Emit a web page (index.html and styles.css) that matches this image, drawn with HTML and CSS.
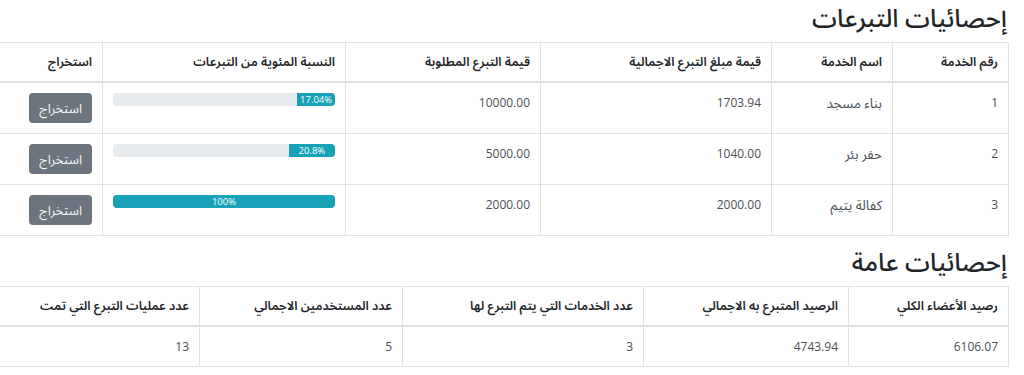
FILE: index.html
```html
<!DOCTYPE html>
<html lang="ar" dir="rtl">
<head>
<meta charset="utf-8">
<title>إحصائيات</title>
<link rel="stylesheet" href="styles.css">
</head>
<body>
<main class="page">
  <h3 class="title">إحصائيات التبرعات</h3>
  <table class="grid">
    <colgroup>
      <col style="width:116px"><col style="width:121px"><col style="width:231px"><col style="width:195px"><col style="width:243px"><col style="width:103px">
    </colgroup>
    <thead>
      <tr>
        <th>رقم الخدمة</th>
        <th>اسم الخدمة</th>
        <th>قيمة مبلغ التبرع الاجمالية</th>
        <th>قيمة التبرع المطلوبة</th>
        <th>النسبة المئوية من التبرعات</th>
        <th>استخراج</th>
      </tr>
    </thead>
    <tbody>
      <tr>
        <td>1</td>
        <td class="ar">بناء مسجد</td>
        <td>1703.94</td>
        <td>10000.00</td>
        <td><div class="progress"><div class="bar" style="width:17.04%">17.04%</div></div></td>
        <td><button class="btn">استخراج</button></td>
      </tr>
      <tr>
        <td>2</td>
        <td class="ar">حفر بئر</td>
        <td>1040.00</td>
        <td>5000.00</td>
        <td><div class="progress"><div class="bar" style="width:20.8%">20.8%</div></div></td>
        <td><button class="btn">استخراج</button></td>
      </tr>
      <tr>
        <td>3</td>
        <td class="ar">كفالة يتيم</td>
        <td>2000.00</td>
        <td>2000.00</td>
        <td><div class="progress"><div class="bar" style="width:100%">100%</div></div></td>
        <td><button class="btn">استخراج</button></td>
      </tr>
    </tbody>
  </table>

  <h3 class="title">إحصائيات عامة</h3>
  <table class="grid grid-small">
    <colgroup>
      <col style="width:160px"><col style="width:205px"><col style="width:241px"><col style="width:203px"><col style="width:200px">
    </colgroup>
    <thead>
      <tr>
        <th>رصيد الأعضاء الكلي</th>
        <th>الرصيد المتبرع به الاجمالي</th>
        <th>عدد الخدمات التي يتم التبرع لها</th>
        <th>عدد المستخدمين الاجمالي</th>
        <th>عدد عمليات التبرع التي تمت</th>
      </tr>
    </thead>
    <tbody>
      <tr>
        <td>6106.07</td>
        <td>4743.94</td>
        <td>3</td>
        <td>5</td>
        <td>13</td>
      </tr>
    </tbody>
  </table>
</main>
</body>
</html>
```

FILE: styles.css
```css
html, body {
  margin: 0;
  padding: 0;
  background: #ffffff;
}

body {
  direction: rtl;
  font-family: "Open Sans", "Noto Sans Arabic", "DejaVu Sans", sans-serif;
  font-size: 12px;
  color: #212529;
}

.page {
  width: 1009px;
  margin-right: 15px;
  padding: 0;
}

.title {
  margin: 0 0 8px 0;
  padding-right: 2px;
  font-size: 25px;
  line-height: 34px;
  font-weight: 500;
  color: #212529;
}

.grid {
  width: 1009px;
  table-layout: fixed;
  border-collapse: collapse;
  margin-bottom: 8px;
}

.grid th,
.grid td {
  border: 1px solid #dee2e6;
  padding: 10px 10px;
  text-align: right;
  vertical-align: top;
}

.grid th:last-child,
.grid td:last-child {
  border-left: 0;
}

.grid th {
  font-weight: 600;
  font-size: 12.5px;
  line-height: 18px;
  color: #212529;
  border-bottom: 2px solid #dee2e6;
}

.grid td {
  line-height: 20px;
  color: #495057;
}

.grid td.ar {
  font-size: 13.5px;
}

.grid-small td {
  line-height: 19px;
}

.progress {
  height: 13px;
  background: #e9ecef;
  border-radius: 4px;
  overflow: hidden;
  display: flex;
}

.bar {
  height: 13px;
  background: #17a2b8;
  color: #ffffff;
  font-size: 9.5px;
  line-height: 13px;
  text-align: center;
  white-space: nowrap;
}

.btn {
  display: block;
  height: 30px;
  padding: 0 10px;
  border: 0;
  border-radius: 4px;
  background: #6c757d;
  color: #f4f5f6;
  font-family: inherit;
  font-size: 13px;
  line-height: 30px;
}
```
